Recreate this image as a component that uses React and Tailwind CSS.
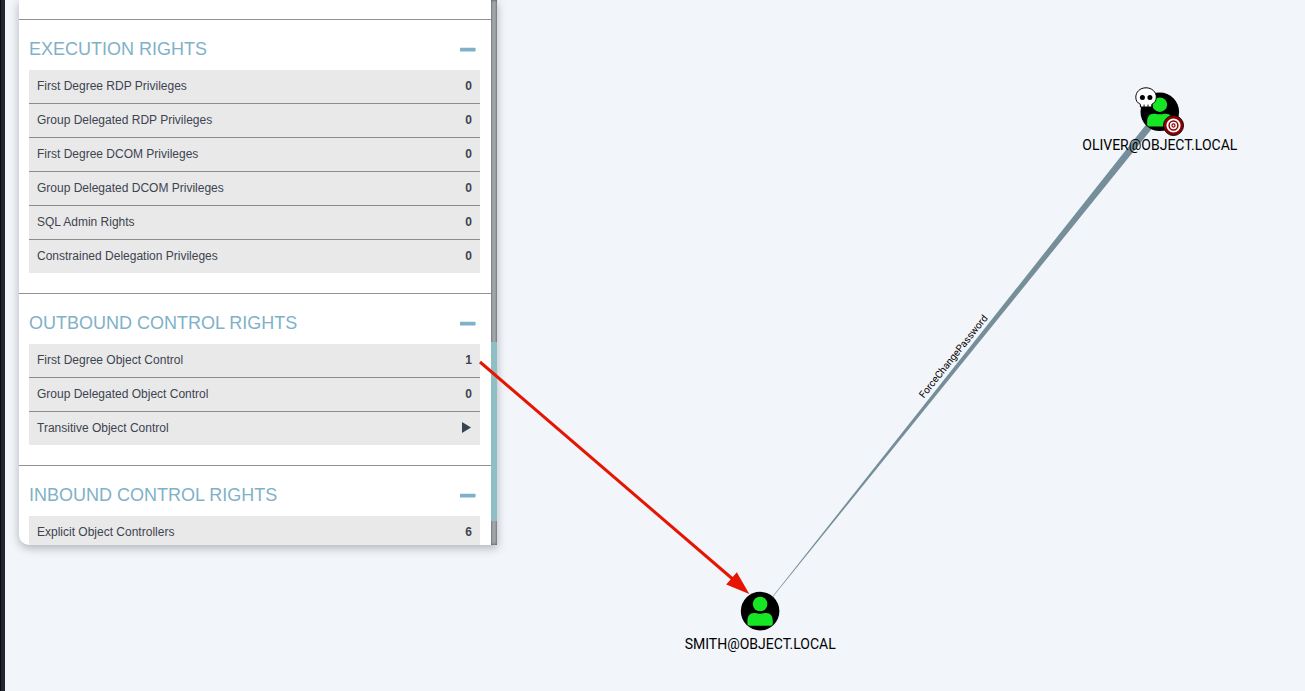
import React from 'react';

const sections = [
  {
    title: 'EXECUTION RIGHTS',
    rows: [
      ['First Degree RDP Privileges', '0'],
      ['Group Delegated RDP Privileges', '0'],
      ['First Degree DCOM Privileges', '0'],
      ['Group Delegated DCOM Privileges', '0'],
      ['SQL Admin Rights', '0'],
      ['Constrained Delegation Privileges', '0'],
    ],
  },
  {
    title: 'OUTBOUND CONTROL RIGHTS',
    rows: [
      ['First Degree Object Control', '1'],
      ['Group Delegated Object Control', '0'],
      ['Transitive Object Control', null],
    ],
  },
  {
    title: 'INBOUND CONTROL RIGHTS',
    rows: [['Explicit Object Controllers', '6']],
  },
];

function Section({ title, rows }) {
  return (
    <section className="shrink-0 border-t border-[#929292] pb-5">
      <div className="flex h-[50px] items-center justify-between pr-[15px] pl-2.5 pt-[7px]">
        <h2 className="text-[18px] leading-5 text-[#7fb1c8]">{title}</h2>
        <svg className="h-6 w-4" viewBox="0 0 16 24">
          <rect x="-0.3" y="10.8" width="15.900" height="3.600" rx="1" fill="#7fb1c8" />
        </svg>
      </div>
      <ul className="mr-[11px] ml-2.5 divide-y divide-[#8c8c8c] bg-[#e9e9e9]">
        {rows.map(([label, value]) => (
          <li key={label} className="flex h-[34px] items-center justify-between px-2 pb-[2px] text-[12px] text-[#3d4450] last:h-[33px] last:pb-px">
            <span>{label}</span>
            {value !== null ? (
              <span className="font-bold">{value}</span>
            ) : (
              <svg className="mr-px mb-px h-[11px] w-[9px]" viewBox="0 0 9 11">
                <path d="M0 0L9 5.5L0 11Z" fill="#374350" />
              </svg>
            )}
          </li>
        ))}
      </ul>
    </section>
  );
}

function UserNode({ x, y }) {
  return (
    <g transform={`translate(${x} ${y})`}>
      <circle r="19.3" fill="#000" />
      <circle cy="-7.1" r="7.3" fill="#17e625" />
      <path d="M-12.700 10.500C-12.700 5 -10.500 1.900 -6 1.900H-4.800Q0 3.200 4.800 1.900H6C10.500 1.900 12.700 5 12.700 10.500V12Q12.700 14.700 10.500 14.700H-10.500Q-12.700 14.700 -12.700 12Z" fill="#17e625" />
    </g>
  );
}

function Skull() {
  return (
    <g transform="translate(1146 98)">
      <path d="M0 -10.200C-6 -10.200 -10.200 -6 -10.200 -.8C-10.200 2.800 -8.500 5 -5.600 6.300V9H5.800V6.300C8.700 5 10.300 2.500 10.300 -.8C10.300 -6 6 -10.200 0 -10.200Z" fill="#fff" stroke="#000" strokeWidth="1" />
      <circle cx="-3.600" cy="-.4" r="2.500" />
      <circle cx="3.900" cy="-.4" r="2.500" />
      <path d="M-1.900 6.500V9.200M2 6.500V9.200" stroke="#000" strokeWidth="0.9" />
    </g>
  );
}

function Graph() {
  return (
    <svg className="pointer-events-none absolute inset-0 h-full w-full" viewBox="0 0 1305 691" fontFamily="Roboto, sans-serif">
      <path d="M772.500 596.400L1147.500 122.800L1153.100 127.300L773 596.800Z" fill="#758e99" />
      <UserNode x={1159.8} y={111.8} />
      <UserNode x={760.1} y={611.1} />
      <Skull />
      <g transform="translate(1173.500 125.500)" fill="none">
        <circle r="10" fill="#8c0005" stroke="#160000" strokeWidth="1" />
        <circle r="6.100" stroke="#fff" strokeWidth="1.900" />
        <circle r="2.900" stroke="#fff" strokeWidth="1.500" />
        <circle r="1" fill="#fff" />
      </g>
      <text x="1159.800" y="150" textAnchor="middle" fontSize="14">OLIVER@OBJECT.LOCAL</text>
      <text x="760.200" y="649" textAnchor="middle" fontSize="14">SMITH@OBJECT.LOCAL</text>
      <text transform="translate(956 358.500) rotate(-51.3)" textAnchor="middle" fontSize="10">ForceChangePassword</text>
      <path d="M480 362L735 581" stroke="#e61400" strokeWidth="3" />
      <path d="M749.300 594L726.200 584.500L736.800 572.200Z" fill="#e61400" />
    </svg>
  );
}

export default function App() {
  return (
    <main className="relative flex h-[691px] w-full overflow-hidden bg-[#f2f5fa] font-['Liberation_Sans',Arial,sans-serif]">
      <div className="w-[5px] shrink-0 border-l border-[#0b0c11] bg-[#232630]" />
      <aside className="ml-3.5 flex h-[545px] w-[478px] overflow-hidden rounded-bl-[10px] bg-white shadow-[0_3px_10px_rgba(0,0,0,0.28)]">
        <div className="flex flex-1 flex-col overflow-hidden pt-[19px]">
          {sections.map((section) => (
            <Section key={section.title} {...section} />
          ))}
        </div>
        <div className="flex w-1.5 shrink-0 flex-col bg-[#a4a9ac] shadow-[inset_0_0_3px_rgba(0,0,0,0.6)]">
          <div className="mt-[342px] h-[179px] bg-[#8fbfc4]" />
        </div>
      </aside>
      <Graph />
    </main>
  );
}
